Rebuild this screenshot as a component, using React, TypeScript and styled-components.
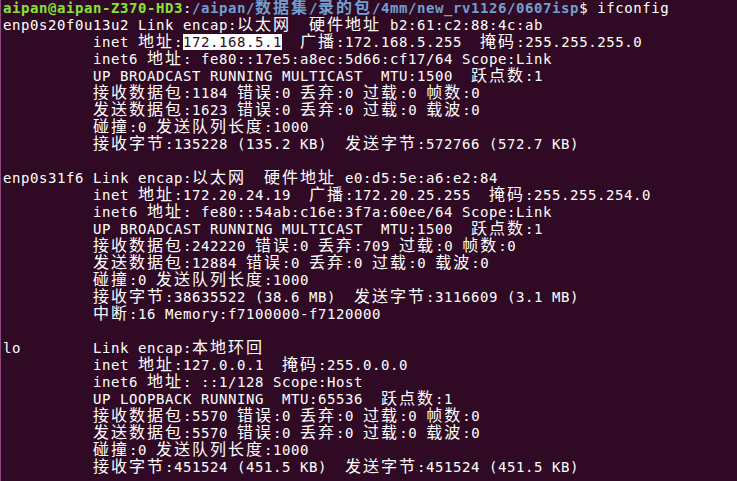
import React from "react";
import styled, { createGlobalStyle } from "styled-components";

const GlobalStyle = createGlobalStyle`
  html, body {
    margin: 0;
    padding: 0;
    background: #300a24;
  }
`;

const CJK = /([\u2e80-\u9fff\uff00-\uffef]+)/;

type Tone = "plain" | "user" | "path";

const lines: string[] = [
  "enp0s20f0u13u2 Link encap:以太网  硬件地址 b2:61:c2:88:4c:ab",
  "__SELECTED__",
  "          inet6 地址: fe80::17e5:a8ec:5d66:cf17/64 Scope:Link",
  "          UP BROADCAST RUNNING MULTICAST  MTU:1500  跃点数:1",
  "          接收数据包:1184 错误:0 丢弃:0 过载:0 帧数:0",
  "          发送数据包:1623 错误:0 丢弃:0 过载:0 载波:0",
  "          碰撞:0 发送队列长度:1000",
  "          接收字节:135228 (135.2 KB)  发送字节:572766 (572.7 KB)",
  "",
  "enp0s31f6 Link encap:以太网  硬件地址 e0:d5:5e:a6:e2:84",
  "          inet 地址:172.20.24.19  广播:172.20.25.255  掩码:255.255.254.0",
  "          inet6 地址: fe80::54ab:c16e:3f7a:60ee/64 Scope:Link",
  "          UP BROADCAST RUNNING MULTICAST  MTU:1500  跃点数:1",
  "          接收数据包:242220 错误:0 丢弃:709 过载:0 帧数:0",
  "          发送数据包:12884 错误:0 丢弃:0 过载:0 载波:0",
  "          碰撞:0 发送队列长度:1000",
  "          接收字节:38635522 (38.6 MB)  发送字节:3116609 (3.1 MB)",
  "          中断:16 Memory:f7100000-f7120000",
  "",
  "lo        Link encap:本地环回",
  "          inet 地址:127.0.0.1  掩码:255.0.0.0",
  "          inet6 地址: ::1/128 Scope:Host",
  "          UP LOOPBACK RUNNING  MTU:65536  跃点数:1",
  "          接收数据包:5570 错误:0 丢弃:0 过载:0 帧数:0",
  "          发送数据包:5570 错误:0 丢弃:0 过载:0 载波:0",
  "          碰撞:0 发送队列长度:1000",
  "          接收字节:451524 (451.5 KB)  发送字节:451524 (451.5 KB)",
];

// terminal cells: ascii = 1 cell (9px), CJK = 2 cells (18px)
function cells(text: string) {
  return text.split(CJK).map((part, i) =>
    part === "" ? null : CJK.test(part) ? (
      <Wide key={i}>{part}</Wide>
    ) : (
      <React.Fragment key={i}>{part}</React.Fragment>
    )
  );
}

export default function App() {
  return (
    <>
      <GlobalStyle />
      <Terminal>
        <Scrollback>
          <Line>
            <Seg $tone="user">aipan@aipan-Z370-HD3</Seg>
            <Seg $tone="plain">:</Seg>
            <Seg $tone="path">{cells("/aipan/数据集/录的包/4mm/new_rv1126/0607isp")}</Seg>
            <Seg $tone="plain">$ ifconfig</Seg>
          </Line>
          {lines.map((l, i) =>
            l === "__SELECTED__" ? (
              <Line key={i}>
                {cells("          inet 地址:")}
                <Selected>172.168.5.1</Selected>
                {cells("  广播:172.168.5.255  掩码:255.255.255.0")}
              </Line>
            ) : (
              <Line key={i}>{cells(l)}</Line>
            )
          )}
        </Scrollback>
      </Terminal>
    </>
  );
}

const Terminal = styled.div`
  box-sizing: border-box;
  width: 737px;
  height: 481px;
  overflow: hidden;
  background: #300a24;
  border-left: 1px solid #8a4a7c;
  padding: 0 0 0 2px;
  color: #ffffff;
  font-family: "DejaVu Sans Mono", "Liberation Mono", monospace;
  font-size: 14px;
  letter-spacing: 0.572px;
`;

// the view is scrolled a couple of pixels, so the first row is clipped at the top
const Scrollback = styled.div`
  margin-top: -2px;
`;

const Line = styled.div`
  height: 17px;
  line-height: 17px;
  white-space: pre;
`;

const Seg = styled.span<{ $tone: Tone }>`
  font-weight: ${(p) => (p.$tone === "plain" ? "normal" : "bold")};
  color: ${(p) =>
    p.$tone === "user" ? "#8ae234" : p.$tone === "path" ? "#729fcf" : "#ffffff"};
`;

const Wide = styled.span`
  font-family: "Noto Sans CJK SC", "Noto Sans CJK JP", sans-serif;
  font-size: 16px;
  letter-spacing: 2px;
  line-height: 17px;
`;

const Selected = styled.span`
  background: #ffffff;
  color: #300a24;
`;
